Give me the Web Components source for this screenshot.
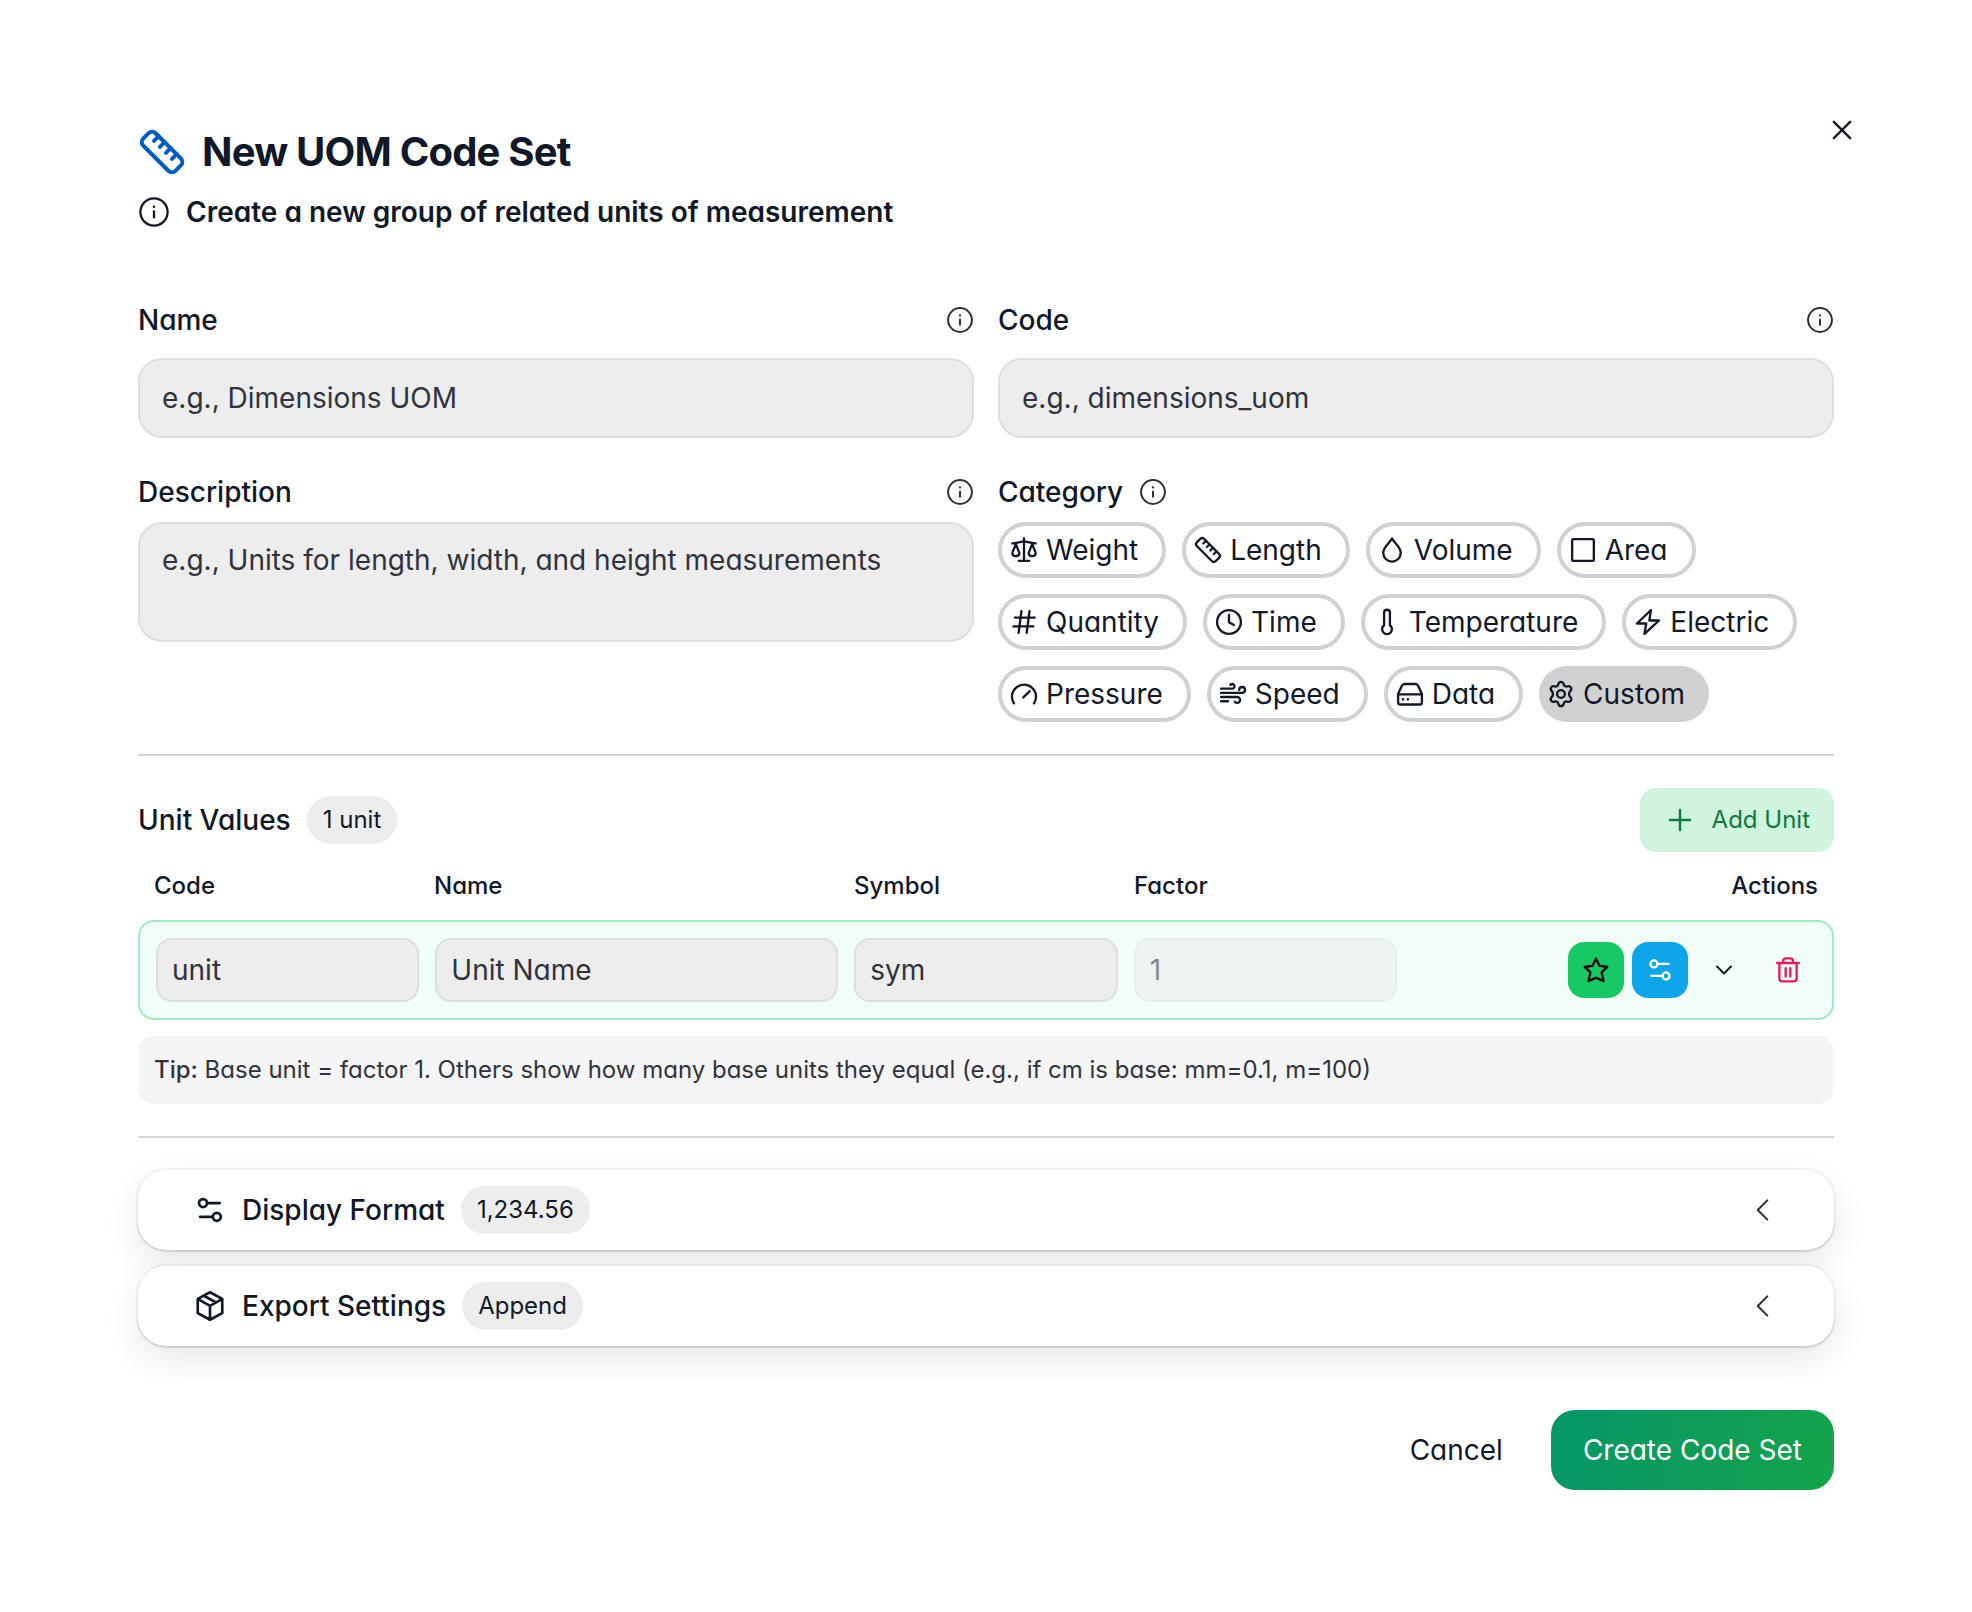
<!DOCTYPE html>
<html lang="en">
<head>
<meta charset="utf-8">
<title>New UOM Code Set</title>
<style>
  html { background: #fff; }
  body { margin: 0; font-family: Inter, sans-serif; font-feature-settings: "cv11"; font-size: 28px; line-height: 40px; color: #111827; }
</style>
</head>
<body>
<uom-dialog></uom-dialog>

<script>
const ICONS = {
  info: '<circle cx="12" cy="12" r="10.2"/><path d="M12 11.5v4.6"/><path d="M12 8.1h.01" stroke-width="1.9"/>',
  ruler: '<path d="M21.4 15.2a2.5 2.5 0 0 1 0 3.5l-2.7 2.7a2.5 2.5 0 0 1-3.5 0L2.6 8.8a2.5 2.5 0 0 1 0-3.5l2.7-2.7a2.5 2.5 0 0 1 3.5 0Z"/><path d="M10.3 4.1 8 6.4M13.3 7.1 11 9.4M16.3 10.1 14 12.4M19.3 13.1 17 15.4"/>',
  close: '<path d="m5 5 14 14M19 5 5 19"/>',
  scale: '<path d="M12 2v19M7.5 21.3h9M2 6.3C5.5 6.3 9 5 12 4.6c3 .4 6.5 1.7 10 1.7M5 7 2 14.5c0 1.6 1.3 2.7 3 2.7s3-1.1 3-2.7ZM19 7l-3 7.5c0 1.6 1.3 2.7 3 2.7s3-1.1 3-2.7Z"/>',
  drop: '<path d="M12 2.2C9.5 6.5 4.5 9.3 4.5 14.4a7.5 7.5 0 0 0 15 0C19.5 9.3 14.5 6.5 12 2.2Z"/>',
  square: '<rect x="2.7" y="2.7" width="18.6" height="18.600" rx="1"/>',
  hash: '<path d="M4.200 8.200h17M3 15.800h17M9.800 2.700l-2.400 18.600M16.700 2.700l-2.400 18.600"/>',
  clock: '<circle cx="12" cy="12" r="10.2"/><path d="M12 6v6.2l4.2 2.3"/>',
  thermo: '<path d="M9.500 14.800V4a2.500 2.500 0 0 1 5 0v10.800a4.200 4.200 0 1 1-5 0Z"/>',
  bolt: '<path d="M14.5 1.8 2.5 13.3h8l-1.5 8.9 12.5-11.5h-8.3Z"/>',
  gauge: '<path d="M3.400 20a10.300 10.300 0 1 1 17.200 0M11.400 14.900l5.500-5.300"/>',
  wind: '<path d="M1.800 7.400h9.600a2 2 0 1 0-1.700-3.200M1.800 11h18a2.500 2.500 0 1 0-2.500-2.500M1.800 14.600h14a2.500 2.500 0 1 1-2.200 4M1.800 18.200h6"/>',
  drive: '<path d="M1.8 12 5 5c.4-1 1.2-1.6 2.3-1.6h9.4c1.1 0 1.9.6 2.3 1.6l3.2 7v7a2 2 0 0 1-2 2H3.8a2 2 0 0 1-2-2ZM1.8 12.3h20.4"/><path d="M6 16.6h.01M10.2 16.6h.01" stroke-width="2.2"/>',
  gear: '<circle cx="12" cy="12" r="3.3"/><path d="M9.6 3.900C9.900 2.500 10.600 1.600 12 1.600s2.100.9 2.400 2.300c.3 1.400 1.500 2 2.800 1.600 1.400-.4 2.600-.3 3.300.9s.2 2.300-.8 3.300c-1 1-1 3.600 0 4.600s1.500 2.100.8 3.300-1.900 1.300-3.300.9c-1.300-.4-2.500.2-2.800 1.600-.3 1.400-1 2.300-2.400 2.300s-2.100-.9-2.400-2.300c-.3-1.400-1.500-2-2.800-1.600-1.400.4-2.600.3-3.300-.9s-.2-2.300.8-3.300 1-3.600 0-4.600-1.500-2.100-.8-3.300 1.900-1.300 3.300-.9c1.300.4 2.500-.2 2.800-1.600Z"/>',
  plus: '<path d="M12 4.5v15M4.5 12h15"/>',
  star: '<path d="m12 2.3 3 6.1 6.7 1-4.9 4.7 1.7 7.4L12 18.6l-6.500 2.900 1.700-7.400L2.300 9.400l6.700-1Z"/>',
  sliders: '<circle cx="6.8" cy="6.8" r="3"/><circle cx="17.1" cy="17.1" r="3"/><path d="M9.8 6.8h9.5M14.1 17.1H4.6"/>',
  down: '<path d="m5 8.5 7 7 7-7"/>',
  left: '<path d="m16 4.8-7.2 7.2 7.2 7.2"/>',
  trash: '<path d="M2.7 6h18.6M4.6 6v13.5a2.2 2.2 0 0 0 2.2 2.2h10.4a2.2 2.2 0 0 0 2.2-2.2V6M7.8 6V4.2A2.2 2.2 0 0 1 10 2h4a2.2 2.2 0 0 1 2.2 2.2V6M10 10.5v7M14 10.5v7"/>',
  box: '<path d="m12 1.700 9.200 5v10.600l-9.200 5-9.200-5V6.700ZM3 6.900l9 5 9-5M12 11.900v10.200M7.400 4.300l9 5"/>'
};

function define(name, css, html) {
  const template = document.createElement('template');
  template.innerHTML = `<style>*,*::before,*::after{box-sizing:border-box}button,input,textarea{font:inherit;font-feature-settings:inherit;color:inherit;margin:0}button{cursor:pointer}${css}</style>${html}`;
  customElements.define(name, class extends HTMLElement {
    connectedCallback() {
      if (this.shadowRoot) return;
      const content = template.content.cloneNode(true);
      for (const el of content.querySelectorAll('[data-from]')) {
        for (const pair of el.dataset.from.split(' ')) {
          const [attr, source] = pair.split(':');
          if (this.hasAttribute(source)) el.setAttribute(attr, this.getAttribute(source));
        }
      }
      this.attachShadow({ mode: 'open', delegatesFocus: true }).append(content);
    }
  });
}

customElements.define('uom-icon', class extends HTMLElement {
  connectedCallback() {
    if (this.shadowRoot) return;
    const root = this.attachShadow({ mode: 'open' });
    root.innerHTML = `<style>:host{display:block;flex:none;width:var(--icon,28px);height:var(--icon,28px)}svg{display:block;width:100%;height:100%}</style>
      <svg viewBox="0 0 24 24" fill="none" stroke="currentColor" stroke-width="${this.getAttribute('weight') || 1.5}" stroke-linecap="round" stroke-linejoin="round" aria-hidden="true">${ICONS[this.getAttribute('name')]}</svg>`;
  }
});

define('uom-field', `
  :host{display:flex;flex-direction:column;gap:16px}
  :host([multiline]){gap:8px}
  .top{display:flex;justify-content:space-between;align-items:center;font-weight:500;min-height:44px}
  uom-icon{color:#2b303b}
  input,textarea{display:block;width:100%;border:2px solid #dedede;border-radius:24px;background:#ededed;padding:0 22px;height:80px;outline-color:#006fee}
  textarea{height:120px;padding:16px 22px;resize:none}
  ::placeholder{color:#30333d;opacity:1}
  :host([multiline]) input,:host(:not([multiline])) textarea{display:none}
`, `<div class="top"><label for="control"><slot></slot></label><uom-icon name="info" weight="1.7"></uom-icon></div>
  <input id="control" data-from="placeholder:placeholder">
  <textarea data-from="placeholder:placeholder aria-label:label"></textarea>`);

define('uom-chip', `
  :host{display:block}
  button{display:flex;align-items:center;gap:8px;height:56px;padding:0 24px 0 8px;border:4px solid #d1d1d1;border-radius:28px;background:#fff;line-height:40px}
  :host([selected]) button{background:#d1d1d1;border-width:0}
`, `<button type="button"><uom-icon weight="2" data-from="name:icon"></uom-icon><span><slot></slot></span></button>`);

define('uom-badge', `
  :host{display:flex;align-items:center;height:48px;padding:0 16px;border-radius:24px;background:#ededed;font-size:24px;font-weight:400;line-height:32px}
`, `<slot></slot>`);

define('uom-action', `
  :host{display:block}
  button{display:flex;align-items:center;justify-content:center;width:56px;height:56px;padding:0;border:0;border-radius:16px;background:var(--fill,transparent);color:var(--ink,#111827)}
`, `<button type="button" data-from="aria-label:label"><uom-icon weight="2" data-from="name:icon"></uom-icon></button>`);

define('uom-panel', `
  :host{display:block;--icon:32px}
  button{display:flex;align-items:center;width:100%;height:80px;gap:16px;padding:0 56px;border:0;border-radius:28px;background:#fff;text-align:left;
    box-shadow:0 0 0 2px rgba(0,0,0,.04),0 2px 2px rgba(0,0,0,.1),0 14px 36px rgba(0,0,0,.09)}
  .title{font-weight:500}
  .end{margin-left:auto;color:#2b303b}
`, `<button type="button" aria-expanded="false"><uom-icon weight="2" data-from="name:icon"></uom-icon><span class="title"><slot></slot></span><slot name="badge"></slot><uom-icon class="end" name="left"></uom-icon></button>`);

define('uom-header', `
  :host{display:flex;justify-content:space-between;align-items:flex-start}
  .text{display:flex;flex-direction:column;gap:8px;padding:22px 0 0}
  h1,p{display:flex;align-items:center;gap:16px;margin:0}
  h1{font-size:40px;line-height:56px;font-weight:700;letter-spacing:-0.02em;--icon:48px}
  h1 uom-icon{color:#005bc4}
  p{font-weight:600;line-height:48px;--icon:32px}
  uom-action{margin-right:-36px}
`, `<div class="text"><h1><uom-icon name="ruler" weight="2"></uom-icon><slot></slot></h1>
  <p><uom-icon name="info" weight="1.7"></uom-icon><slot name="subtitle"></slot></p></div>
  <uom-action icon="close" label="Close"></uom-action>`);

define('uom-categories', `
  :host{display:flex;flex-direction:column;gap:8px}
  .top{display:flex;align-items:center;gap:16px;min-height:44px;font-weight:500}
  uom-icon{color:#2b303b}
  .list{display:flex;flex-wrap:wrap;gap:16px}
`, `<div class="top"><span id="t">Category</span><uom-icon name="info" weight="1.7"></uom-icon></div>
  <div class="list" role="group" aria-labelledby="t"><slot></slot></div>`);

define('uom-units', `
  :host{display:flex;flex-direction:column;gap:16px}
  .bar{display:flex;align-items:center;gap:16px}
  h2{margin:0;font-size:28px;line-height:40px;font-weight:500}
  .add{display:flex;align-items:center;gap:16px;height:64px;margin-left:auto;padding:0 24px;border:0;border-radius:16px;background:#d1f4e0;color:#0e793c;font-size:24px;line-height:32px;--icon:32px}
  table,thead,tbody{display:block}
  tr{display:grid;grid-template-columns:repeat(12,minmax(0,1fr));gap:16px;align-items:center}
  th,td{display:block;padding:0;grid-column:span 2}
  .wide{grid-column:span 3}
  thead tr{padding:2px 16px 18px}
  th{font-size:24px;line-height:32px;font-weight:500;text-align:left}
  th:last-child{text-align:right}
  tbody tr{padding:16px;border:2px solid #a2e9c1;border-radius:16px;background:#f1fdf7}
  input{display:block;width:100%;height:64px;padding:0 14px;border:2px solid #dedede;border-radius:16px;background:#ededed;outline-color:#006fee}
  ::placeholder{color:#30333d;opacity:1}
  input:disabled{opacity:.5;color:#11181c}
  .actions{display:flex;justify-content:flex-end;gap:8px}
  .tip{margin:0;padding:16px;border-radius:16px;background:#f5f5f5;color:#30333d;font-size:24px;line-height:36px}
  .tip b{font-weight:500}
  .green{--fill:#17c964;--ink:#000}
  .blue{--fill:#0ea5e9;--ink:#fff}
  .red{--ink:#e11d5c}
  .down{--icon:24px}
`, `<div class="bar"><h2>Unit Values</h2><uom-badge>1 unit</uom-badge>
  <button class="add" type="button"><uom-icon name="plus" weight="1.8"></uom-icon>Add Unit</button></div>
  <table><thead><tr><th>Code</th><th class="wide">Name</th><th>Symbol</th><th>Factor</th><th class="wide">Actions</th></tr></thead>
  <tbody><tr>
    <td><input aria-label="Code" placeholder="unit"></td>
    <td class="wide"><input aria-label="Name" placeholder="Unit Name"></td>
    <td><input aria-label="Symbol" placeholder="sym"></td>
    <td><input aria-label="Factor" value="1" disabled></td>
    <td class="wide"><div class="actions">
      <uom-action class="green" icon="star" label="Base unit"></uom-action>
      <uom-action class="blue" icon="sliders" label="Format"></uom-action>
      <uom-action class="down" icon="down" label="Expand"></uom-action>
      <uom-action class="red" icon="trash" label="Delete"></uom-action></div></td>
  </tr></tbody></table>
  <p class="tip"><b>Tip:</b> Base unit = factor 1. Others show how many base units they equal (e.g., if cm is base: mm=0.1, m=100)</p>`);

define('uom-footer', `
  :host{display:flex;justify-content:flex-end;gap:16px}
  button{height:80px;padding:0 32px;border:0;border-radius:24px;background:transparent}
  .primary{background:linear-gradient(100deg,#059669,#16a34a);color:#fff}
`, `<button type="button">Cancel</button><button class="primary" type="submit">Create Code Set</button>`);

define('uom-dialog', `
  :host{display:block;padding:102px 0}
  uom-header,uom-footer{margin:0 138px}
  main{padding:62px 138px 32px;overflow:clip;display:flex;flex-direction:column;gap:32px}
  .fields{display:grid;grid-template-columns:repeat(2,minmax(0,1fr));gap:32px 24px;align-items:start}
  hr{width:100%;height:2px;margin:0;border:0;background:#d4d4d4}
  .panels{display:flex;flex-direction:column;gap:16px}
  uom-footer{margin-top:32px}
`, `<uom-header>New UOM Code Set<span slot="subtitle">Create a new group of related units of measurement</span></uom-header>
  <main>
    <div class="fields">
      <uom-field placeholder="e.g., Dimensions UOM">Name</uom-field>
      <uom-field placeholder="e.g., dimensions_uom">Code</uom-field>
      <uom-field multiline label="Description" placeholder="e.g., Units for length, width, and height measurements">Description</uom-field>
      <uom-categories>
        <uom-chip icon="scale">Weight</uom-chip><uom-chip icon="ruler">Length</uom-chip><uom-chip icon="drop">Volume</uom-chip><uom-chip icon="square">Area</uom-chip>
        <uom-chip icon="hash">Quantity</uom-chip><uom-chip icon="clock">Time</uom-chip><uom-chip icon="thermo">Temperature</uom-chip><uom-chip icon="bolt">Electric</uom-chip>
        <uom-chip icon="gauge">Pressure</uom-chip><uom-chip icon="wind">Speed</uom-chip><uom-chip icon="drive">Data</uom-chip><uom-chip icon="gear" selected>Custom</uom-chip>
      </uom-categories>
    </div>
    <hr>
    <uom-units></uom-units>
    <hr>
    <div class="panels">
      <uom-panel icon="sliders">Display Format<uom-badge slot="badge">1,234.56</uom-badge></uom-panel>
      <uom-panel icon="box">Export Settings<uom-badge slot="badge">Append</uom-badge></uom-panel>
    </div>
  </main>
  <uom-footer></uom-footer>`);
</script>
</body>
</html>
